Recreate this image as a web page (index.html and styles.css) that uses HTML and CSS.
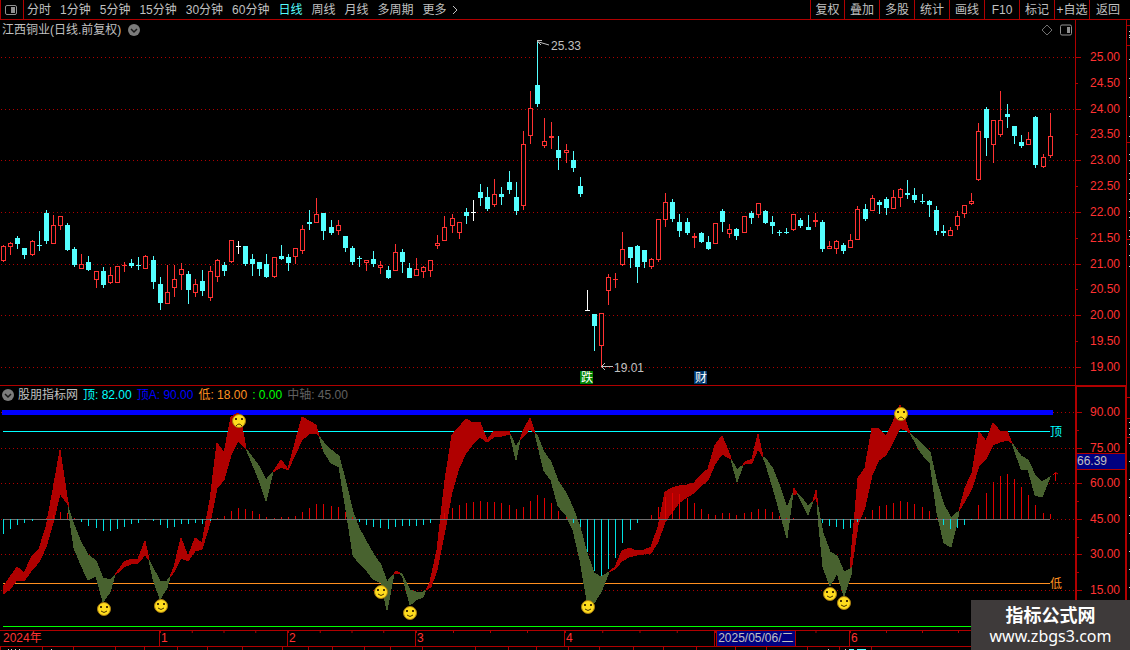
FILE: index.html
```html
<!DOCTYPE html>
<html lang="zh-CN">
<head>
<meta charset="utf-8">
<title>江西铜业 日线</title>
<link rel="stylesheet" href="styles.css">
</head>
<body>
<header class="toolbar">
  <button class="layout-toggle" aria-label="布局">
    <svg width="14" height="12" viewBox="0 0 14 12"><rect x="1.5" y="1.500" width="11" height="9" rx="1.500" fill="none" stroke="#909090"/><rect x="7" y="3" width="4" height="6" fill="#909090"/></svg>
  </button>
  <nav class="periods">
    <button>分时</button>
    <button>1分钟</button>
    <button>5分钟</button>
    <button>15分钟</button>
    <button>30分钟</button>
    <button>60分钟</button>
    <button class="active">日线</button>
    <button>周线</button>
    <button>月线</button>
    <button>多周期</button>
    <button class="more">更多<svg width="6" height="10" viewBox="0 0 6 10"><path d="M1 1L5 5L1 9" fill="none" stroke="#c0c0c0"/></svg></button>
  </nav>
  <div class="tools">
    <button>复权</button>
    <button>叠加</button>
    <button>多股</button>
    <button>统计</button>
    <button>画线</button>
    <button>F10</button>
    <button>标记</button>
    <button>+自选</button>
    <button>返回</button>
  </div>
</header>
<div class="body">
  <main class="panes">
    <section class="pane price">
      <div class="plot">
        <div class="pane-title">
          <span>江西铜业(日线.前复权)</span>
          <button class="chevron" aria-label="展开"><svg width="12" height="12" viewBox="0 0 12 12"><circle cx="6" cy="6" r="6" fill="#7c7c7c"/><path d="M3 5L6 8L9 5" fill="none" stroke="#181818" stroke-width="1.500"/></svg></button>
          <span class="corner">
            <svg width="12" height="12" viewBox="0 0 12 12"><path d="M6 1L11 6L6 11L1 6Z" fill="none" stroke="#707070"/></svg>
            <svg width="12" height="12" viewBox="0 0 12 12"><rect x=".5" y="1" width="11" height="10" rx="1.500" fill="none" stroke="#909090"/><rect x="7" y="3" width="3" height="6" fill="#909090"/></svg>
          </span>
        </div>
        <svg class="chart" id="price-chart" viewBox="0 39 1075 346">
          <g class="grid" id="price-grid"></g>
          <g id="candles" shape-rendering="crispEdges"></g>
          <path class="note-line" d="M537 40.500H542M537 41.500L549 45M538 42L541 45"/>
          <text class="note" x="551" y="50">25.33</text>
          <path class="note-line" d="M601 366.500H613M605 363L601.500 366.500L605 370"/>
          <text class="note" x="614" y="372">19.01</text>
          <rect x="580" y="371" width="13" height="13" fill="#008000"/>
          <text class="tag" x="581" y="382">跌</text>
          <rect x="694" y="371" width="13" height="13" fill="#003870"/>
          <text class="tag" x="695" y="382">财</text>
        </svg>
      </div>
      <div class="axis price-axis">
        <span>25.00</span><span>24.50</span><span>24.00</span><span>23.50</span><span>23.00</span><span>22.50</span><span>22.00</span><span>21.50</span><span>21.00</span><span>20.50</span><span>20.00</span><span>19.50</span><span>19.00</span>
      </div>
    </section>
    <section class="pane indicator">
      <div class="plot">
        <div class="pane-title legend">
          <button class="chevron" aria-label="展开"><svg width="12" height="12" viewBox="0 0 12 12"><circle cx="6" cy="6" r="6" fill="#7c7c7c"/><path d="M3 5L6 8L9 5" fill="none" stroke="#181818" stroke-width="1.500"/></svg></button>
          <span>股朋指标网</span>
          <span class="cyan">顶: 82.00</span>
          <span class="blue">顶A: 90.00</span>
          <span class="orange">低: 18.00</span>
          <span class="green">: 0.00</span>
          <span class="gray">中轴: 45.00</span>
        </div>
        <svg class="chart" id="indicator-chart" viewBox="0 403 1075 227">
          <defs>
            <g id="face">
              <circle r="6.500" fill="#ffdc1e" stroke="#a87c10"/>
              <path d="M-4 -2H-2M2 -2H4" stroke="#4a3400" stroke-width="2"/>
            </g>
            <g id="happy"><use href="#face"/><path d="M-3 2Q0 5 3 2" fill="none" stroke="#4a3400"/></g>
            <g id="sad"><use href="#face"/><path d="M-3 5Q0 1 3 5" fill="none" stroke="#4a3400"/></g>
          </defs>
          <g class="grid" id="indicator-grid"></g>
          <path d="M3 431.500H1050" stroke="#00ffff"/>
          <path d="M3 583.500H1050" stroke="#ff9020"/>
          <path d="M3 626.500H1075" stroke="#00ff00"/>
          <path d="M2 412.500H1053" stroke="#0000ff" stroke-width="5"/>
          <g id="ribbons" shape-rendering="crispEdges"></g>
          <path d="M3 519.500H1050" stroke="#707070"/>
          <g id="bars" shape-rendering="crispEdges"></g>
          <g id="faces"></g>
          <text class="mark" x="1050" y="436" fill="#00ffff">顶</text>
          <text class="mark" x="1050" y="588" fill="#ff9020">低</text>
          <path d="M1055.500 481V473M1053 475L1055.500 472.500L1058 474" fill="none" stroke="#e00000"/>
        </svg>
      </div>
      <div class="axis indicator-axis">
        <span>90.00</span><span>75.00</span><span>60.00</span><span>45.00</span><span>30.00</span><span>15.00</span>
        <b class="current">66.39</b>
      </div>
    </section>
    <div class="timeline">
      <span>2024年</span><span>1</span><span>2</span><span>3</span><span>4</span><span>5</span><span>6</span>
      <b class="date">2025/05/06/二</b>
    </div>
    <svg class="ticks" id="foot-ticks" viewBox="0 0 1126 3" preserveAspectRatio="none"></svg>
  </main>
  <aside class="edge"><svg id="edge-ticks" viewBox="0 20 3 630" preserveAspectRatio="none"></svg></aside>
</div>
<div class="watermark"><strong>指标公式网</strong><span>www.zbgs3.com</span></div>
<script src="script.js"></script>
</body>
</html>
```
FILE: styles.css
```css
* { box-sizing: border-box; }
body {
  margin: 0;
  background: #000;
  color: #c0c0c0;
  font: 12px/14px "Liberation Sans", "Noto Sans CJK SC", sans-serif;
  overflow: hidden;
}
button {
  margin: 0;
  padding: 0;
  border: 0;
  background: none;
  color: inherit;
  font: inherit;
  white-space: nowrap;
  cursor: pointer;
}
svg { display: block; }
.toolbar {
  display: flex;
  height: 20px;
  border-bottom: 1px solid #b00000;
  border-left: 1px solid #b00000;
}
.layout-toggle {
  display: flex;
  align-items: center;
  justify-content: center;
  width: 23px;
  padding-right: 2px;
  border-right: 1px solid #b00000;
}
.periods {
  display: flex;
  gap: 9px;
  padding-left: 3px;
}
.periods .active { color: #54fcfc; }
.more {
  display: flex;
  align-items: center;
  gap: 5px;
}
.tools {
  display: grid;
  grid-template-columns: 34px repeat(7, 35px) 37px;
  margin-left: auto;
  padding-right: 4px;
}
.tools button { border-left: 1px solid #b00000; }
.body {
  display: grid;
  grid-template-columns: 1fr 4px;
}
.edge {
  position: relative;
  border-left: 1px solid #b00000;
}
.edge svg {
  position: absolute;
  width: 100%;
  height: 100%;
}
.pane {
  display: grid;
  grid-template-columns: 1fr 51px;
}
.price { border-bottom: 1px solid #b00000; }
.chart {
  width: 100%;
  height: auto;
}
.pane-title {
  display: flex;
  align-items: center;
  gap: 7px;
  height: 19px;
  padding: 0 3px 0 2px;
}
.corner {
  display: flex;
  gap: 7px;
  margin-left: auto;
}
.legend {
  gap: 5px;
  height: 17px;
}
.legend .chevron { margin-right: -1px; }
.cyan { color: #00ffff; }
.blue { color: #0000ff; }
.orange { color: #ff9020; }
.green { color: #00ff00; }
.gray { color: #606060; }
.axis {
  position: relative;
  display: flex;
  flex-direction: column;
  justify-content: space-between;
  color: #ff3232;
  text-align: right;
}
.axis span {
  position: relative;
  padding-right: 6px;
}
.axis span::before,
.indicator-axis span::after {
  content: "";
  position: absolute;
  left: 0;
  top: 7px;
  width: 5px;
  height: 1px;
  background: #b00000;
}
.price-axis {
  border-left: 1px solid #b00000;
  padding: 30px 0 11px;
}
.price-axis span:nth-child(even)::before { width: 2px; }
.indicator-axis {
  border: 2px solid #b00000;
  border-width: 1px 1px 0 2px;
  padding: 18px 0 33px;
}
.indicator-axis span { padding-right: 5px; }
.indicator-axis span::after {
  top: 25px;
  width: 2px;
}
.current {
  position: absolute;
  top: 27%;
  left: 0;
  right: 0;
  height: 17px;
  border: 1px solid #b00000;
  border-width: 1px 0;
  background: #000080;
  color: #c0c0c0;
  font-weight: normal;
  text-align: left;
}
.timeline {
  position: relative;
  display: grid;
  grid-template-columns: 159fr 128fr 128fr 149fr 150fr 135fr 277fr;
  height: 17px;
  border: 1px solid #b00000;
  border-width: 1px 0;
  color: #ff3232;
}
.timeline span {
  border-left: 1px solid #b00000;
  padding-left: 1px;
  background: linear-gradient(90deg, #b00000 1px, transparent 1px) 0 0 / 25% 2px repeat-x;
}
.timeline span:first-child {
  border: 0;
  padding-left: 3px;
  background: none;
}
.timeline span:last-of-type { background-size: 36px 2px; }
.date {
  position: absolute;
  left: 63.6%;
  top: 0;
  padding: 0 1px;
  border: 1px solid #b00000;
  border-width: 0 1px;
  background: #000080;
  color: #c0c0c0;
  font-weight: normal;
  line-height: 15px;
}
.ticks {
  width: 100%;
  height: 3px;
}
.grid path {
  stroke: #b00000;
  stroke-dasharray: 1 3;
  shape-rendering: crispEdges;
}
.note { fill: #c0c0c0; }
.note-line {
  fill: none;
  stroke: #c0c0c0;
}
.tag { fill: #fff; }
.watermark {
  position: fixed;
  right: 0;
  bottom: 0;
  display: flex;
  flex-direction: column;
  align-items: center;
  width: 159px;
  height: 50px;
  padding-top: 3px;
  background: #3e3a3a;
  color: #fff;
}
.watermark strong {
  font: bold 18px/23px "Noto Sans CJK SC", sans-serif;
}
.watermark span {
  font: 16px/20px "Noto Sans", sans-serif;
}
```
FILE: script.js
```js
const NS = "http://www.w3.org/2000/svg";
const UP = "#ff3232", DOWN = "#54ffff", FLAT = "#ffffff";

function add(id, tag, attrs) {
  const el = document.createElementNS(NS, tag);
  for (const k in attrs) el.setAttribute(k, attrs[k]);
  document.getElementById(id).appendChild(el);
}
const barX = i => Math.round(3.05 + 7.12 * i);

// Each candle: high, body top, body bottom, low, direction.
const candles = `245 246 261 262 R,242 243 247 255 R,236 238 244 249 C,248 248 255 259 C,240 241 255 256 R,231 245 246 251 C,210 213 241 244 C,215 225 244 244 R,216 216 226 230 R,223 225 250 251 C,
247 249 265 267 C,254 264 269 269 R,256 262 270 271 C,271 271 280 288 R,267 271 285 288 C,267 275 283 284 R,266 266 283 283 R,262 265 266 272 R,259 263 266 268 C,257 265 266 270 C,
255 256 269 269 R,256 260 282 289 C,277 284 303 310 C,265 292 304 304 R,265 279 288 297 R,263 269 275 290 R,271 274 290 304 C,279 284 293 297 R,270 281 291 296 C,266 271 298 301 R,
259 260 277 282 R,262 265 271 276 C,240 240 262 263 R,241 246 247 254 W,246 246 264 266 C,254 259 264 276 C,262 262 269 276 C,254 264 277 278 C,257 257 277 278 R,245 256 259 260 C,
254 257 263 271 C,248 248 257 264 R,225 229 251 254 R,210 222 224 230 C,198 214 223 223 R,213 213 231 240 C,220 227 233 235 C,220 225 231 235 R,236 236 248 252 C,246 248 262 265 C,
256 258 259 267 C,260 260 263 271 R,251 259 264 267 C,261 265 268 274 R,266 270 278 279 C,244 252 271 271 R,249 252 262 273 C,263 268 278 278 C,258 269 276 276 R,266 267 272 278 R,
260 260 271 277 R,235 243 246 249 R,216 227 241 241 R,214 218 226 233 R,222 222 233 239 R,208 212 216 224 C,200 212 213 221 W,184 192 198 206 C,187 197 209 211 C,179 194 205 207 R,
187 194 197 205 C,171 182 190 194 C,182 197 211 215 C,131 144 206 210 R,91 108 136 144 R,40 85 104 107 C,118 141 146 148 R,122 136 138 149 R,136 150 158 170 C,144 150 153 163 R,
151 160 168 172 C,177 186 194 197 C,290 310 311 311 W,314 314 326 351 C,313 313 346 367 R,274 277 291 305 R,273 279 280 288 R,232 249 265 266 R,247 247 258 268 C,245 246 267 283 C,
250 250 262 268 C,258 259 267 269 R,219 219 260 262 R,193 202 220 227 R,199 202 219 222 C,214 222 231 237 C,218 222 233 235 C,233 236 238 248 R,232 233 242 243 C,236 242 249 250 C,
223 223 244 244 R,209 211 222 232 C,224 229 234 238 R,228 229 236 240 C,216 216 233 233 R,211 213 218 224 C,203 203 215 218 R,210 211 223 224 C,216 222 226 234 C,230 232 233 236 C,
228 232 233 234 C,214 214 230 231 R,218 220 226 228 C,215 227 230 230 C,213 220 222 227 R,220 222 249 252 C,241 246 249 249 R,240 241 249 254 R,243 245 251 254 C,234 240 248 248 R,
206 209 240 240 R,204 209 219 221 C,195 198 211 211 R,200 202 205 214 C,197 199 208 215 C,190 197 209 209 R,188 189 198 207 R,180 193 195 199 C,188 195 200 203 C,194 201 202 204 C,
200 201 205 217 C,206 210 231 235 C,225 231 233 236 C,227 230 236 236 R,211 216 226 230 R,205 205 214 218 R,193 201 204 205 R,123 131 180 181 R,107 109 138 156 C,120 120 145 163 R,
91 120 135 137 R,104 114 117 128 C,126 126 136 144 C,135 142 146 148 C,132 139 145 145 R,116 117 165 168 C,154 157 167 168 R,113 136 156 158 R`;

candles.split(",").forEach((row, i) => {
  const [h, t, b, l, dir] = row.trim().split(" ");
  const color = { R: UP, C: DOWN, W: FLAT }[dir];
  const x = barX(i);
  if (t - h > 0) add("candles", "rect", { x, y: h, width: 1, height: t - h, fill: color });
  if (l - b > 0) add("candles", "rect", { x, y: b, width: 1, height: l - b, fill: color });
  add("candles", "rect", { x: x - 2, y: t, width: 5, height: b - t, fill: color });
  if (dir === "R" && b - t > 2) {
    add("candles", "rect", { x: x - 1, y: +t + 1, width: 3, height: b - t - 2, fill: "#000" });
  }
});

[57, 109, 160, 212, 264, 315, 367].forEach(y => add("price-grid", "path", { d: `M1 ${y + 0.5}H1075` }));
[412, 448, 483, 519, 554, 590].forEach(y => add("indicator-grid", "path", { d: `M1 ${y + 0.5}H1075` }));

const rising = [
  "3,587 10,577 17,567 24,573 32,556 39,549 46,527 53,490 60,450 67,497 69,507 67,503 60,494 53,523 46,547 39,562 32,570 24,581 17,580 10,589 3,594",
  "115,575 124,562 131,559 138,559 145,541 149,560 145,555 138,563 131,564 124,567",
  "170,577 174,567 181,538 188,557 195,538 202,543 210,500 217,443 224,453 231,417 238,413 241,420 246,449 238,441 231,455 224,480 217,488 210,523 202,549 195,551 188,561 181,558 174,572",
  "273,472 281,460 288,469 295,443 302,417 309,421 316,425 319,436 316,433 309,434 302,440 295,455 288,470 281,467",
  "394,574 396,571 400,573",
  "426,590 430,582 437,550 445,480 452,435 459,427 466,419 473,423 480,422 487,440 494,431 502,432 509,431 510,434 509,434 502,436 494,437 487,442 480,437 473,444 466,453 459,468 452,492 445,530 437,570 431,587",
  "520,440 523,431 530,418 535,433 530,429 523,437",
  "609,572 615,567 622,551 629,548 637,551 644,550 651,547 658,527 665,492 672,488 679,486 687,485 694,483 701,475 708,469 715,445 722,436 730,455 731,459 722,454 715,464 708,480 701,486 694,493 687,497 679,503 672,512 665,522 658,542 651,553 644,554 637,555 629,557 622,561 615,569",
  "743,465 745,462 752,459 758,434 763,457 758,449 752,463 745,464",
  "793,493 794,488 797,493 794,495",
  "813,501 816,490 818,505 816,498",
  "850,568 858,478 865,468 872,428 879,429 886,436 893,422 900,405 907,425 910,433 907,431 900,428 893,442 886,455 879,460 872,475 865,507 858,525 852,565",
  "959,511 965,488 972,473 979,432 986,441 993,423 1000,431 1007,431 1012,443 1007,440 1000,442 993,445 986,459 979,466 972,488 965,501"
];
const falling = [
  "68,507 74,525 81,542 88,555 96,561 103,578 110,580 115,575 110,592 103,602 96,576 88,580 81,565 74,548",
  "149,560 153,568 160,581 167,581 170,577 167,588 160,599 153,579",
  "246,449 252,457 259,466 266,480 273,472 266,501 259,480 252,463",
  "319,436 324,443 331,450 339,456 346,483 353,512 359,528 366,541 374,555 381,565 387,582 394,574 387,610 381,583 373,579 366,570 359,563 353,555 346,510 339,467 331,463 324,452",
  "400,573 402,574 410,590 416,592 423,592 426,590 423,597 416,600 410,605 403,578",
  "510,434 516,447 520,440 516,460 512,443",
  "535,433 537,435 544,452 551,462 558,481 566,493 573,508 580,527 587,553 594,573 601,577 609,572 601,592 594,603 587,601 580,560 573,530 566,515 558,506 551,480 544,471 537,442",
  "731,459 737,470 743,465 737,482",
  "763,457 766,459 773,469 780,487 787,508 793,493 787,538 780,513 773,488 766,465",
  "797,493 801,497 808,506 813,501 808,515 801,501",
  "817,502 823,533 830,552 837,556 844,572 850,569 851,566 851,575 844,596 837,573 830,586 823,567 819,527",
  "910,433 930,452 937,483 944,505 951,518 959,511 957,523 951,547 944,543 937,513 930,463 921,453",
  "1012,443 1021,456 1028,460 1035,475 1042,482 1050,477 1042,497 1035,495 1028,469 1021,469"
];
falling.forEach(points => add("ribbons", "polygon", { points, fill: "#48622f", stroke: "#48622f" }));
rising.forEach(points => add("ribbons", "polygon", { points, fill: "#b00000", stroke: "#b00000" }));

// Histogram around the 45.00 axis, one value per candle.
const bars = [-15,-10,-6,-4,-2,0,1,4,7,6,1,-3,-7,-9,-12,-12,-10,-8,-5,-4,-1,-2,-6,-9,-8,-5,-5,-4,-5,-2,
  1,3,8,11,10,8,5,2,1,2,2,3,7,11,15,15,13,12,7,2,-3,-6,-8,-9,-10,-8,-7,-7,-7,-6,-4,0,6,11,14,16,17,18,17,17,
  16,14,10,12,18,24,21,16,8,2,-4,-8,-33,-52,-57,-50,-39,-24,-11,-4,0,4,12,22,26,25,21,16,10,5,4,6,6,4,6,7,10,10,7,3,
  1,1,0,0,0,-4,-7,-8,-10,-9,-3,2,9,13,14,16,18,17,15,12,8,1,-6,-10,-9,-6,-1,14,26,37,43,45,40,32,24,14,6,5];
bars.forEach((v, i) => {
  if (v) add("bars", "rect", { x: barX(i), y: v > 0 ? 519 - v : 519, width: 1, height: Math.abs(v), fill: v > 0 ? "#e00000" : "#00e0e0" });
});

[["sad", 239, 421], ["sad", 901, 414], ["happy", 104, 609], ["happy", 161, 606], ["happy", 381, 592],
  ["happy", 410, 613], ["happy", 588, 607], ["happy", 830, 594], ["happy", 844, 603]]
  .forEach(([kind, x, y]) => add("faces", "use", { href: "#" + kind, x, y }));

[0, 42, 73, 115, 144, 177, 207, 242, 282, 308, 332, 364, 390, 422, 475, 508, 536, 568, 599, 633, 663, 696, 735, 766, 807, 839, 871]
  .forEach(x => add("foot-ticks", "rect", { x, y: 0, width: 1, height: 3, fill: "#b00000" }));
[[8, 1], [11, 1], [15, 1], [19, 1], [51, 1], [828, 1], [845, 1]]
  .forEach(([x, width]) => add("foot-ticks", "rect", { x, y: 2, width, height: 1, fill: "#d0d0d0" }));
[[849, 5], [857, 9]].forEach(([x, width]) => add("foot-ticks", "rect", { x, y: 2, width, height: 1, fill: "#54ffff" }));

[25, 45, 142, 239, 397, 418, 437].forEach(y => add("edge-ticks", "rect", { x: 0, y, width: 3, height: 1, fill: "#b00000" }));
[31, 35, 37, 59, 78, 97, 116, 136, 154, 160, 173, 179, 193, 199, 211, 217, 230, 236, 244, 255, 266, 422, 428, 434, 443, 461, 479, 497, 515, 533, 551, 569, 587]
  .forEach(y => add("edge-ticks", "rect", { x: 2, y, width: 1, height: 1, fill: "#d0d0d0" }));
```
